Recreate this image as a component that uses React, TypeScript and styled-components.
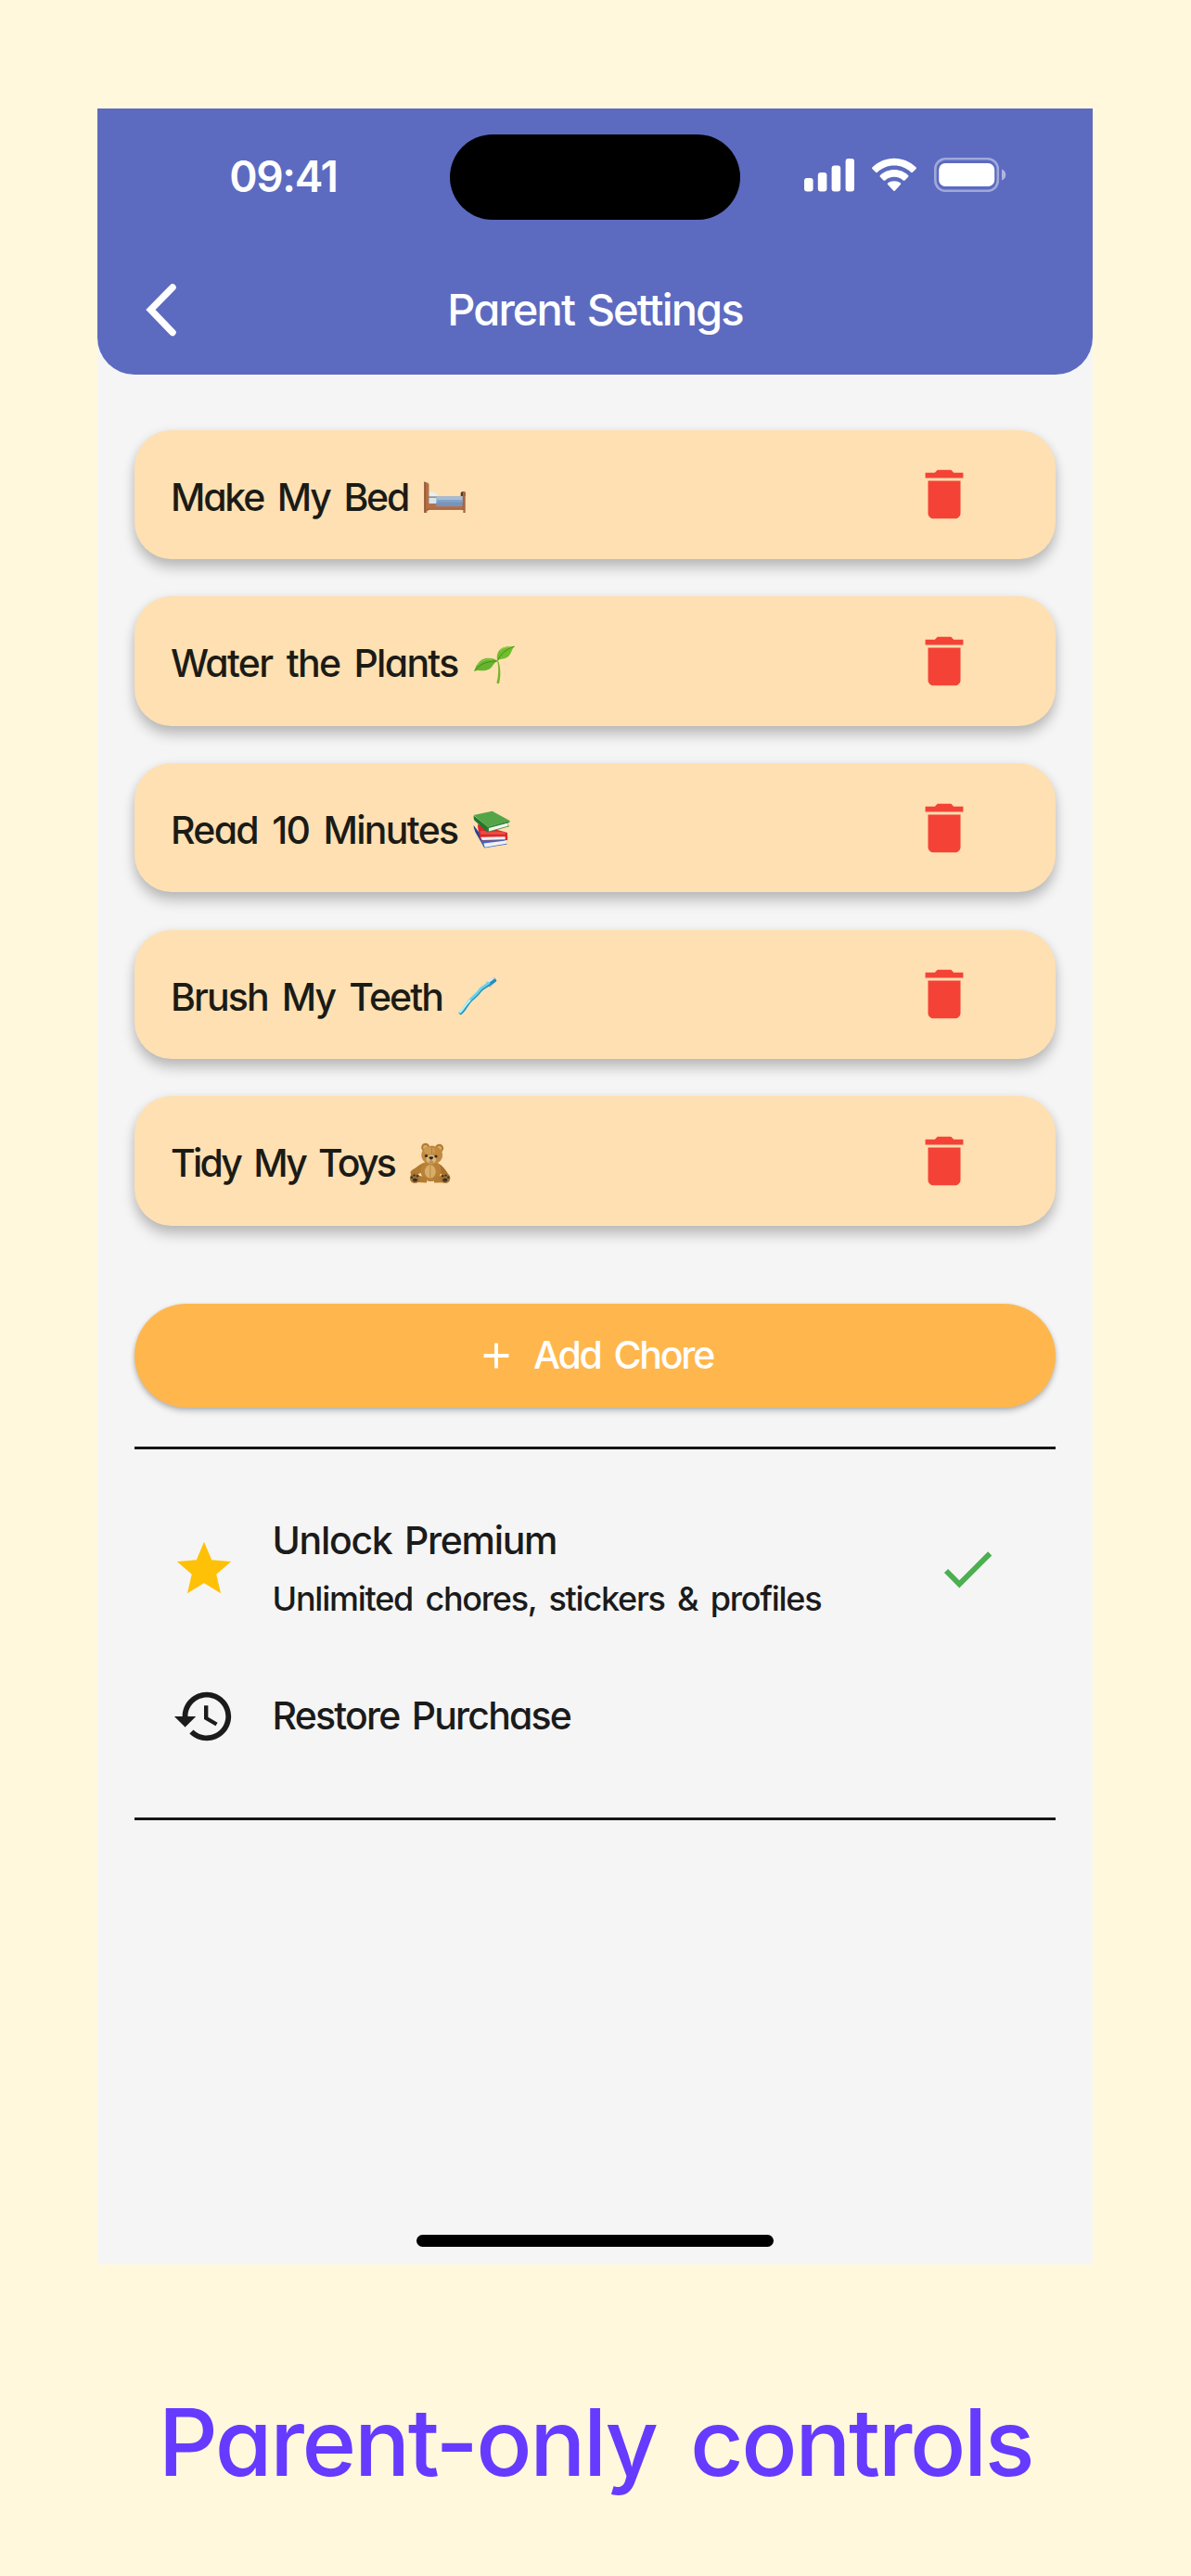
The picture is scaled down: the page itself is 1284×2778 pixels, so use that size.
import React from "react";
import styled, { createGlobalStyle } from "styled-components";

const GlobalStyle = createGlobalStyle`
  *, *::before, *::after { box-sizing: border-box; }
  html, body { margin: 0; padding: 0; background: #fff8dc; }
  svg { display: block; flex: none; }
`;

const Page = styled.main`
  width: 1284px;
  height: 2778px;
  padding: 117px 106px 0 105px;
  background: #fff8dc;
  font-family: Inter, "Open Sans", sans-serif;
  font-feature-settings: "cv11";
  overflow: hidden;
`;

const Phone = styled.section`
  display: flex;
  flex-direction: column;
  height: 2325px;
  background: #f5f5f5;
`;

const Header = styled.header`
  height: 286.5px;
  background: #5c6bc0;
  border-radius: 0 0 40px 40px;
  color: #fff;
`;

const StatusBar = styled.div`
  display: grid;
  grid-template-columns: 1fr 313px 1fr;
  align-items: center;
  height: 146px;
`;

const Island = styled.div`
  height: 92px;
  margin-top: 1px;
  border-radius: 46px;
  background: #000;
`;

const Clock = styled.time`
  padding-left: 21px;
  text-align: center;
  font-size: 46px;
  line-height: 56px;
  font-weight: 600;
  letter-spacing: -1.3px;
  font-feature-settings: normal;
`;

const Indicators = styled.div`
  display: flex;
  align-items: center;
  gap: 19px;
  padding: 0 0 3px 69px;
`;

const NavBar = styled.div`
  display: grid;
  grid-template-columns: 1fr auto 1fr;
  align-items: center;
  height: 140px;
  padding: 2px 0 0;
`;

const BackButton = styled.button`
  width: 90px;
  padding: 0 0 0 50px;
  border: 0;
  background: none;
  color: inherit;
`;

interface LabelProps {
  $size?: number;
  $tracking: number;
  $gap?: number;
}

const Label = styled.span<LabelProps>`
  font-size: ${(p) => p.$size ?? 41}px;
  line-height: 1.2;
  font-weight: 500;
  letter-spacing: ${(p) => p.$tracking}px;
  word-spacing: ${(p) => p.$gap ?? 5}px;
  white-space: nowrap;
`;

const Content = styled.div`
  flex: 1;
  padding: 60px 40px 0;
  color: #1b1b16;
`;

const ChoreList = styled.ul`
  display: flex;
  flex-direction: column;
  gap: 40.2px;
  margin: 0;
  padding: 0;
  list-style: none;
`;

const ChoreCard = styled.li`
  display: flex;
  align-items: center;
  justify-content: space-between;
  height: 139.5px;
  padding: 0 85px 0 39px;
  border-radius: 40px;
  background: #ffe0b2;
  box-shadow: 0 10px 14px rgba(0, 0, 0, 0.2), 0 2px 12px rgba(0, 0, 0, 0.09);
`;

const ChoreName = styled.div`
  display: flex;
  align-items: center;
  gap: 16px;
  padding-top: 6px;
`;

const AddButton = styled.button`
  display: flex;
  align-items: center;
  justify-content: center;
  gap: 17px;
  width: 100%;
  height: 112px;
  margin-top: 84px;
  padding: 0 2px 0 0;
  border: 0;
  border-radius: 56px;
  background: #ffb74d;
  color: #fff;
  font-family: inherit;
  font-feature-settings: inherit;
  box-shadow: 0 4px 6px rgba(0, 0, 0, 0.2), 0 1px 4px rgba(0, 0, 0, 0.12);
`;

const Purchases = styled.section`
  height: 402.5px;
  margin-top: 42.3px;
  border-top: 3px solid #161616;
  border-bottom: 3px solid #161616;
`;

const PurchaseRow = styled.div<{ $height: number }>`
  display: flex;
  align-items: center;
  height: ${(p) => p.$height}px;
  padding: 0 60px 0 39.5px;
  color: #1b1b1b;
`;

const PurchaseText = styled.div`
  display: flex;
  flex: 1;
  flex-direction: column;
  gap: 17px;
  padding-left: 39px;
`;

const HomeIndicator = styled.div`
  width: 385px;
  height: 13px;
  margin: 0 auto 19.5px;
  border-radius: 7px;
  background: #000;
`;

const Caption = styled.h1`
  margin: 132px 0 0 1px;
  text-align: center;
  font-size: 100px;
  line-height: 120px;
  font-weight: 500;
  letter-spacing: -2.4px;
  word-spacing: 12px;
  white-space: nowrap;
  color: #673aff;
`;

const ICONS = {
  trash: "M6 19c0 1.1.9 2 2 2h8c1.1 0 2-.9 2-2V7H6v12zM19 4h-3.5l-1-1h-5l-1 1H5v2h14V4z",
  star: "M12 17.27 18.18 21l-1.64-7.03L22 9.24l-7.19-.61L12 2 9.19 8.63 2 9.24l5.46 4.73L5.82 21z",
  check: "M9 16.17 4.83 12l-1.42 1.41L9 19 21 7l-1.41-1.41z",
  history:
    "M13 3c-4.97 0-9 4.03-9 9H1l3.89 3.89.07.14L9 12H6c0-3.87 3.13-7 7-7s7 3.13 7 7-3.13 7-7 7c-1.93 0-3.68-.79-4.94-2.06l-1.42 1.42C8.27 19.99 10.51 21 13 21c4.97 0 9-4.03 9-9s-4.03-9-9-9zm-1 5v5l4.28 2.54.72-1.21-3.5-2.08V8H12z",
  plus: "M19 13h-6v6h-2v-6H5v-2h6V5h2v6h6v2z",
};

function Icon({ name, color, size = 70 }: { name: keyof typeof ICONS; color: string; size?: number }) {
  return (
    <svg width={size} height={size} viewBox="0 0 24 24" fill={color} aria-hidden="true">
      <path d={ICONS[name]} />
    </svg>
  );
}

function BackArrow() {
  return (
    <svg width="36" height="60" viewBox="0 0 36 60" fill="none" stroke="#fff" strokeWidth="7.5">
      <path d="M31 6 7.5 30 31 54.5" strokeLinecap="round" strokeLinejoin="miter" />
    </svg>
  );
}

function SignalBars() {
  return (
    <svg width="54" height="37" viewBox="0 0 54 37" fill="#fff">
      <rect x="0" y="22" width="9.6" height="14.5" rx="3" />
      <rect x="14.8" y="16" width="9.6" height="20.5" rx="3" />
      <rect x="29.6" y="8.5" width="9.6" height="28" rx="3" />
      <rect x="44.6" y="1" width="9.4" height="35.5" rx="3" />
    </svg>
  );
}

function Wifi() {
  return (
    <svg width="48" height="37" viewBox="0 0 48 37" fill="#fff">
      <path d="M24 .8C33 .8 41.300 4.500 47.400 10.300 48.100 11 48.100 11.600 47.500 12.200L43.900 15.800C43.300 16.400 42.700 16.400 42 15.800 37.300 11.300 31 8.600 24 8.600S10.700 11.300 6 15.800C5.300 16.400 4.700 16.400 4.100 15.800L.5 12.200C-.1 11.600-.1 11 .6 10.300 6.700 4.500 15 .8 24 .8Z" />
      <path d="M24 13.100C29.800 13.100 35.100 15.400 39 19 39.700 19.600 39.700 20.200 39.100 20.800L35.500 24.400C34.900 25 34.300 25 33.600 24.400 31 22.200 27.700 20.800 24 20.800S17 22.200 14.400 24.400C13.700 25 13.100 25 12.500 24.400L8.900 20.800C8.300 20.200 8.300 19.600 9 19 12.900 15.400 18.200 13.100 24 13.100Z" />
      <path d="M24 25.200C26.700 25.200 29 26 30.800 27.300 31.400 27.800 31.400 28.400 30.900 29L24.900 35.400C24.200 36.200 23.800 36.200 23.100 35.400L17.100 29C16.600 28.400 16.600 27.800 17.200 27.300 19 26 21.300 25.200 24 25.200Z" />
    </svg>
  );
}

function Battery() {
  return (
    <svg width="78" height="37" viewBox="0 0 78 37">
      <rect x="1.300" y="1.300" width="67.500" height="34.500" rx="11" fill="none" stroke="#fff" strokeOpacity=".42" strokeWidth="2.600" />
      <rect x="5.200" y="6" width="60" height="25" rx="7" fill="#fff" />
      <path d="M73 12.500c2.600 1 4.300 3.300 4.300 6s-1.700 5-4.300 6z" fill="#fff" fillOpacity=".5" />
    </svg>
  );
}

function Bed() {
  return (
    <>
      <path d="M40.700 18.800q0-1.500 1.500-1.500h2q1.500 0 1.500 1.500V22h-5z" fill="#5f3422" />
      <path d="M5 23h10v7H5z" fill="#dbe5ec" />
      <path d="M4.500 19.500c2-2 5-2.600 7.500-1.500 2 .8 3.500 2.500 3.700 4.200-3 .8-8 .9-11 .6z" fill="#e9eef2" />
      <path d="M4.500 22.300h11.300v1.600H4.500z" fill="#8c8f93" />
      <path d="M5 30h38v6H5z" fill="#b3714a" />
      <path d="M14.500 22.300h28.300v10.500H14.500z" fill="#83a3c8" />
      <path d="M14.500 22.300h28.300v3.700H14.500z" fill="#a9bcd2" />
      <path d="M14.500 28.500h28.300v4.300H14.500z" fill="#7595bd" />
      <path d="M1.300 6.600l4 1.200q1.200.5 1.200 2V36l-1 2h-1.200v2H1.300z" fill="#b17049" />
      <path d="M1.300 6.600l1.700.5V40H1.300z" fill="#945839" />
      <path d="M43 17.600h2.700V40h-2.300v-2.800l-1-.7z" fill="#a86642" />
      <path d="M4.500 35.700h38.500v1.100H4.500z" fill="#8e5335" />
    </>
  );
}

function Seedling() {
  return (
    <>
      <path d="M26.300 20c1.500 7 1.200 16-.9 23.500q1.300 1.300 2.800.2C30 35.500 30 27 26.900 19z" fill="#76b62a" />
      <path d="M1.300 31C3 24 7 18.500 13.500 17c5-1 9.800.2 13 2.900-4 .7-5.300 7.600-11.300 9.700C10.500 31.300 5 28.500 1.300 31z" fill="#67b32e" />
      <path d="M26.300 19.800c-1.500-6 .3-11.500 5.300-14.100C36 3.500 41 4.300 45 3.900 41.500 6 42 12.500 36.500 16c-4 2.400-8.200 1-10.200 3.800z" fill="#71bd2c" />
      <path d="M1.600 30.500C7 24 13 20 26 20M26.500 19.200C30 12 36 7 44.500 4.100" fill="none" stroke="#3e8a1d" strokeWidth=".9" />
      <path d="M5 24c4-4.500 9-6.500 15-5.700M29 9c3-3.500 7-4.200 12-4.200" fill="none" stroke="#93d246" strokeWidth="1" />
    </>
  );
}

function Books() {
  return (
    <>
      <path d="M1.600 17l6 8 6 13.500-.3 3L3.500 24.500Q1.300 20 1.600 17z" fill="#27438f" />
      <path d="M8 30l29-1 1.200 2-3 2 2.500 4.500L13.300 41.500z" fill="#3a69c9" />
      <path d="M12.500 36.500l24-3 .7 3.300-23.500 4z" fill="#f1f1f1" />
      <path d="M6 16l32 9 .2 8L10 33.500Q6 24 6 16z" fill="#d8292b" />
      <path d="M9.300 29.700l26.200-.4.300 3-25 .7z" fill="#f3efee" />
      <path d="M8.500 23l27.500 1-.3 3-26.500-.2z" fill="#ee4a42" />
      <path d="M1.700 6.500L16.700 18.500V25L2.300 11.500Q1.200 9 1.700 6.500z" fill="#25762c" />
      <path d="M1.700 5.900L21.700 1.800 40.500 12 16.700 18.700z" fill="#54a548" />
      <path d="M16.700 18.700L40.500 12v1.500l-1.500.7v3l1.500.8-23.800 6.800z" fill="#2e8735" />
      <path d="M18 20l20.600-5.500v3.300L18 23.400z" fill="#f5f5f0" />
    </>
  );
}

function Toothbrush() {
  return (
    <>
      <path d="M31 7.500c2.500-3 6-5.500 9-5.300 2.300.5 2 3.500.5 5.300L35 13z" fill="#aeb4b8" />
      <path d="M32 6c2-2.200 5-4.200 8-3.700l-6 7z" fill="#e2e5e7" />
      <path d="M3.500 40.500c5-3.500 6.500-10 12-14.800 4-3.500 6-4.700 9.500-9.700 4-4.500 9-5.500 15.500-10.500" fill="none" stroke="#1f8fc2" strokeWidth="3.400" strokeLinecap="round" />
      <path d="M3 39.700c4.500-4 6.500-10 12-14.800 4-3.500 6.500-5.500 9.500-9.700 3-3.500 6-4.700 9.500-7" fill="none" stroke="#69d3e6" strokeWidth="2.700" strokeLinecap="round" />
      <path d="M3.300 39c3-3 5.500-8 10-12" fill="none" stroke="#b5f0f0" strokeWidth="2.300" strokeLinecap="round" />
    </>
  );
}

function Bear() {
  return (
    <>
      <circle cx="17.700" cy="5.300" r="4.500" fill="#b37b32" />
      <circle cx="32.600" cy="6.300" r="4.500" fill="#b37b32" />
      <circle cx="17.700" cy="5.600" r="2.500" fill="#dcae68" />
      <circle cx="32.600" cy="6.600" r="2.500" fill="#dcae68" />
      <path d="M16 22C12 23 8 27 3 30c-3 2-1 7 3 5.500L18 31z" fill="#b27a30" />
      <path d="M32 23c4 2 7 6 9.500 10 1.500 2.500-1 4-3 3L29 31z" fill="#a87029" />
      <ellipse cx="23.500" cy="30.500" rx="11" ry="11.500" fill="#b98138" />
      <ellipse cx="22.800" cy="31.500" rx="6" ry="7.200" fill="#d8ad68" />
      <path d="M7 35l12 2.500v6L9 43zM39 35l-12 2.500v6l10-.3z" fill="#b47c32" />
      <ellipse cx="24.700" cy="13.600" rx="11.400" ry="10.200" fill="#c18a40" />
      <ellipse cx="22" cy="9" rx="6" ry="4" fill="#cd9a51" />
      <ellipse cx="23.800" cy="18" rx="5.500" ry="4.500" fill="#deb779" />
      <path d="M24.500 4v9M22.800 25v14" stroke="#a8712d" strokeWidth=".6" />
      <ellipse cx="18.500" cy="14.600" rx="1.600" ry="1.500" fill="#2f2a24" />
      <ellipse cx="29" cy="15" rx="1.600" ry="1.500" fill="#2f2a24" />
      <path d="M21.300 15.700q2.500-1 5 0-.5 2.600-2.500 2.800-2-.2-2.500-2.800z" fill="#26282b" />
      <path d="M23.800 18v2.300M21.500 20.800q2.300 1.200 4.600 0" stroke="#7a5226" strokeWidth=".7" fill="none" />
      <ellipse cx="6.300" cy="38.500" rx="5.400" ry="5.500" fill="#a8742f" />
      <ellipse cx="39" cy="38.500" rx="5.400" ry="5.500" fill="#a8742f" />
      <g fill="#39332b">
        <ellipse cx="6.500" cy="40.500" rx="2.600" ry="2" />
        <circle cx="3" cy="37.800" r="1.200" />
        <circle cx="5.600" cy="35.600" r="1.200" />
        <circle cx="9" cy="36.300" r="1.200" />
        <ellipse cx="38.800" cy="40.500" rx="2.600" ry="2" />
        <circle cx="36.300" cy="36.300" r="1.200" />
        <circle cx="39.700" cy="35.600" r="1.200" />
        <circle cx="42.300" cy="37.800" r="1.200" />
      </g>
    </>
  );
}

const CHORES = [
  { name: "Make My Bed", tracking: -2.2, Picture: Bed },
  { name: "Water the Plants", tracking: -1.7, Picture: Seedling },
  { name: "Read 10 Minutes", tracking: -1.7, Picture: Books },
  { name: "Brush My Teeth", tracking: -1.9, Picture: Toothbrush },
  { name: "Tidy My Toys", tracking: -2.8, Picture: Bear },
];

export default function App() {
  return (
    <Page>
      <GlobalStyle />
      <Phone>
        <Header>
          <StatusBar>
            <Clock>09:41</Clock>
            <Island />
            <Indicators>
              <SignalBars />
              <Wifi />
              <Battery />
            </Indicators>
          </StatusBar>
          <NavBar>
            <BackButton aria-label="Back">
              <BackArrow />
            </BackButton>
            <Label $size={47} $tracking={-1.9} $gap={3}>
              Parent Settings
            </Label>
          </NavBar>
        </Header>

        <Content>
          <ChoreList>
            {CHORES.map(({ name, tracking, Picture }) => (
              <ChoreCard key={name}>
                <ChoreName>
                  <Label $tracking={tracking} $gap={6}>
                    {name}
                  </Label>
                  <svg width="46" height="46" viewBox="0 0 46 46" aria-hidden="true">
                    <Picture />
                  </svg>
                </ChoreName>
                <Icon name="trash" color="#f44336" />
              </ChoreCard>
            ))}
          </ChoreList>

          <AddButton>
            <Icon name="plus" color="#fff" size={46} />
            <Label $tracking={-2.2}>Add Chore</Label>
          </AddButton>

          <Purchases>
            <PurchaseRow $height={257}>
              <Icon name="star" color="#ffc107" />
              <PurchaseText>
                <Label $tracking={-1.3} $gap={4}>
                  Unlock Premium
                </Label>
                <Label $size={36} $tracking={-1.25}>
                  Unlimited chores, stickers &amp; profiles
                </Label>
              </PurchaseText>
              <Icon name="check" color="#4caf50" />
            </PurchaseRow>
            <PurchaseRow $height={62}>
              <Icon name="history" color="#1b1b1b" />
              <PurchaseText>
                <Label $tracking={-1.8} $gap={4}>
                  Restore Purchase
                </Label>
              </PurchaseText>
            </PurchaseRow>
          </Purchases>
        </Content>
        <HomeIndicator />
      </Phone>
      <Caption>Parent-only controls</Caption>
    </Page>
  );
}
